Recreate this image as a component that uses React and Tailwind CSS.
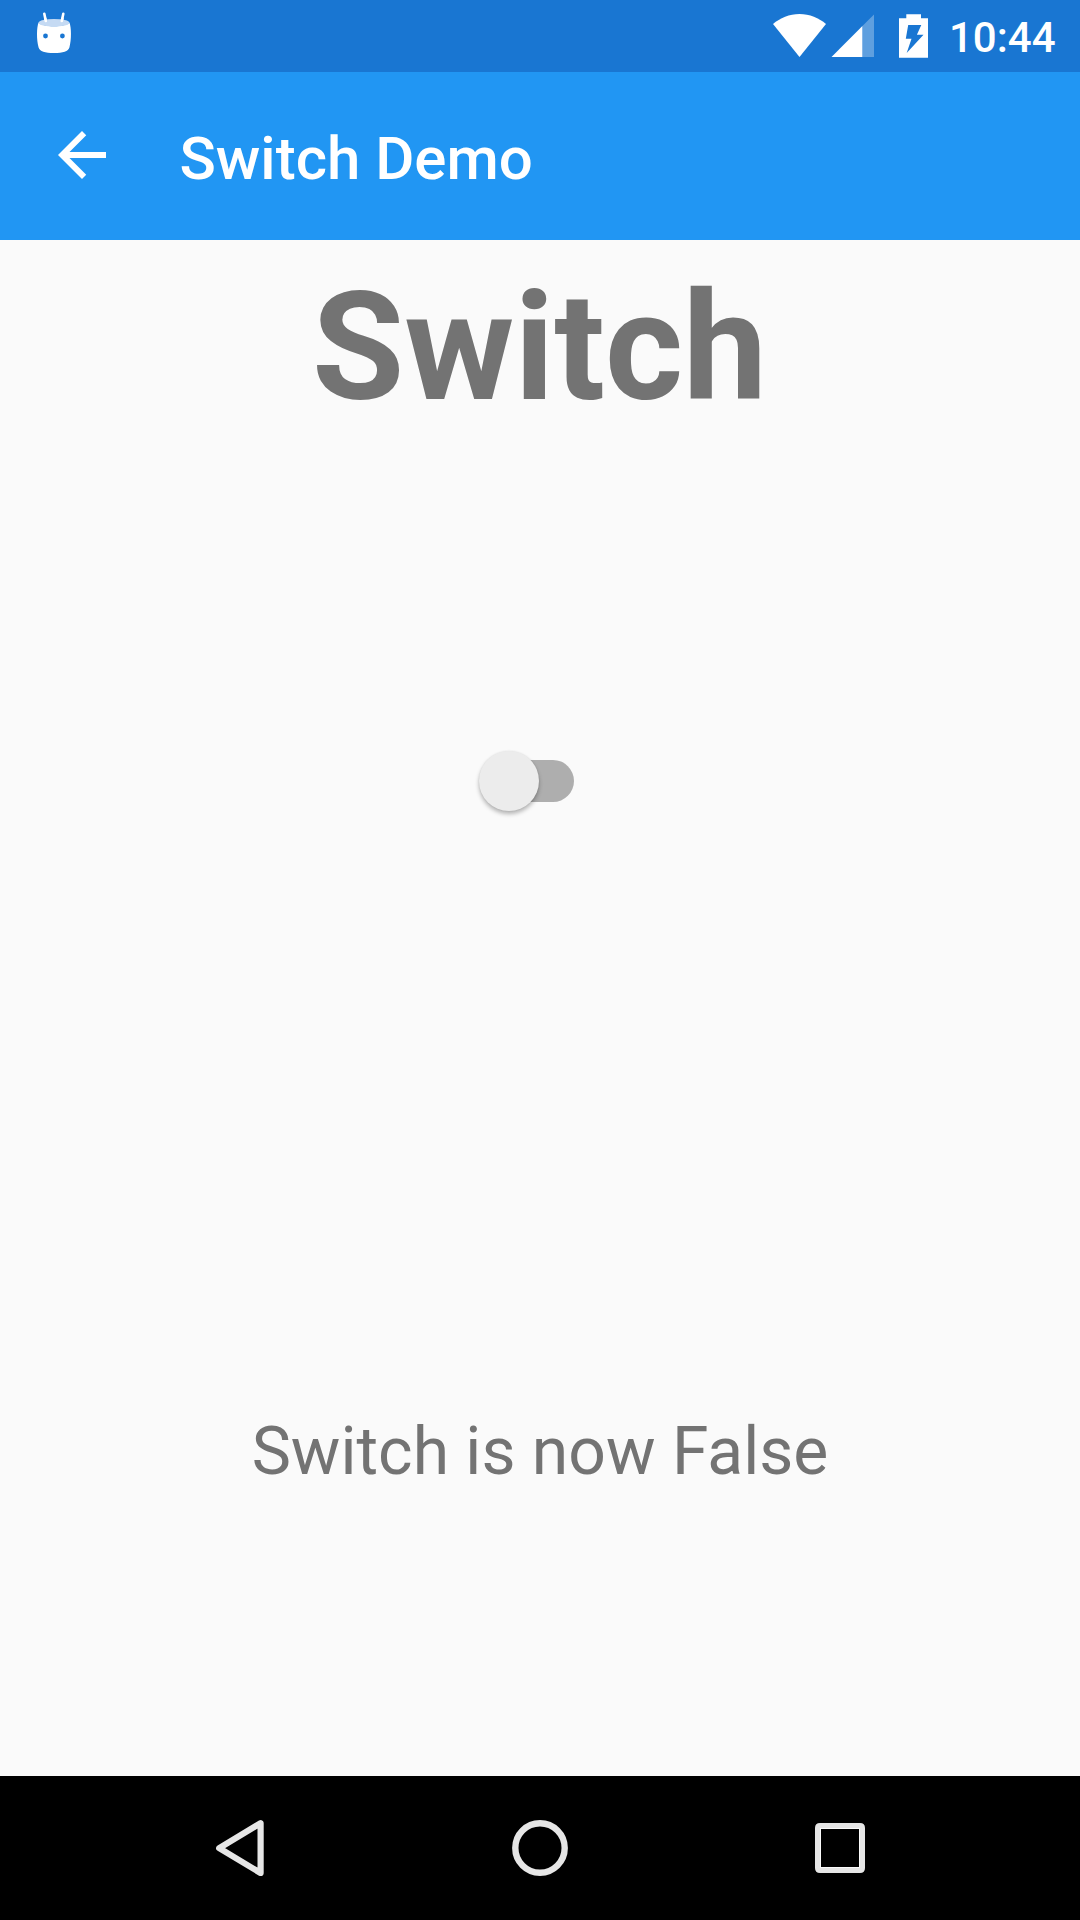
import React, { useState } from "react";

function DebugIcon() {
  return (
    <svg className="h-[44px] w-[36px]" viewBox="36 11 36 44" fill="none">
      <path d="M44.3 13.8L45.7 20.5M63.3 13.8L61.9 20.5" stroke="#fff" strokeWidth="2.6" strokeLinecap="round" />
      <path d="M38.6 22.6C36.6 27 36.4 40 38.6 47.5C39.6 51.3 45 53 54 53C63 53 68.4 51.3 69.4 47.5C71.6 40 71.4 27 69.4 22.6C66 27.6 42 27.6 38.6 22.6Z" fill="#fff" />
      <ellipse cx="54" cy="22.8" rx="15.4" ry="3.9" fill="#c5daf3" />
      <path d="M45.2 18.5L45.8 21M62.4 18.5L61.8 21" stroke="#fff" strokeWidth="2.6" strokeLinecap="round" />
      <circle cx="45.5" cy="36" r="2.4" fill="#1976d2" />
      <circle cx="62.4" cy="36" r="2.4" fill="#1976d2" />
    </svg>
  );
}

function StatusBar() {
  return (
    <div className="flex h-[72px] items-start bg-[#1976d2] pt-[11px] pl-[36px] pr-[24.5px] text-white">
      <DebugIcon />
      <div className="ml-auto flex items-start">
        <svg className="h-[48px] w-[54px]" viewBox="773 11 54 48">
          <path d="M799.5 57L773 24C780 18 789.5 14 799.5 14C809.5 14 819 18 826 24Z" fill="#fff" />
        </svg>
        <svg className="ml-[4px] h-[48px] w-[44px]" viewBox="831 11 44 48">
          <path d="M862.4 57H874V14.5L862.4 26Z" fill="#fff" fillOpacity="0.3" />
          <path d="M831.5 57H862.4V26Z" fill="#fff" />
        </svg>
        <svg className="ml-[23px] h-[48px] w-[32px]" viewBox="898 11 32 48">
          <path
            fillRule="evenodd"
            fill="#fff"
            d="M906.3 14.2H921V18.3H928V57.8H899V18.3H906.3ZM908.2 25L905.8 38.8H911.5L906.7 53L923.5 34.7H916.9L921.3 25Z"
          />
        </svg>
        <span className="mt-[2px] ml-[19px] text-[42px] leading-[50px] font-medium">10:44</span>
      </div>
    </div>
  );
}

function AppBar() {
  return (
    <header className="flex h-[168px] items-start bg-[#2196f3] pl-[46px] text-white">
      <button aria-label="Back" className="mt-[47px]">
        <svg className="size-[72px]" viewBox="0 0 24 24" fill="currentColor">
          <path d="M20 11H7.83l5.59-5.59L12 4l-8 8 8 8 1.41-1.41L7.83 13H20v-2z" />
        </svg>
      </button>
      <h1 className="mt-[52px] ml-[61.5px] text-[60px] leading-[70px] font-medium">Switch Demo</h1>
    </header>
  );
}

function Toggle({ on, onChange }) {
  return (
    <button role="switch" aria-checked={on} onClick={() => onChange(!on)} className="flex h-[62px] w-[95px] items-center">
      <span className={`flex h-[42px] w-[95px] items-center rounded-full ${on ? "justify-end bg-[#90caf9]" : "bg-[linear-gradient(90deg,transparent_30px,#aeaeae_30px)]"}`}>
        <span className="size-[60px] shrink-0 rounded-full bg-[#ececec] shadow-[0_3px_4px_rgba(0,0,0,0.28),0_0_2px_rgba(0,0,0,0.08)]" />
      </span>
    </button>
  );
}

function NavBar() {
  return (
    <nav className="flex h-[144px] items-center justify-between bg-black px-[204px]">
      <svg className="size-[72px]" viewBox="204 1812 72 72" fill="none" stroke="#e6e6e6" strokeWidth="6.2" strokeLinejoin="round">
        <path d="M219.2 1848.2L260.6 1823.2V1873Z" />
      </svg>
      <svg className="size-[72px]" viewBox="0 0 72 72" fill="none" stroke="#e6e6e6" strokeWidth="6.4">
        <circle cx="36" cy="36" r="24.7" />
      </svg>
      <svg className="size-[72px]" viewBox="804 1812 72 72" fill="none">
        <path fill="#e6e6e6" fillRule="evenodd" d="M820 1823H860Q865 1823 865 1828V1868Q865 1873 860 1873H820Q815 1873 815 1868V1828Q815 1823 820 1823ZM821 1829V1867H859V1829Z" />
        <rect x="820.6" y="1828.6" width="38.8" height="38.8" stroke="#fff" strokeWidth="0.8" />
      </svg>
    </nav>
  );
}

export default function App() {
  const [on, setOn] = useState(false);
  return (
    <div className="flex h-[1920px] w-[1080px] flex-col overflow-hidden bg-[#fafafa] font-['Roboto',sans-serif]">
      <StatusBar />
      <AppBar />
      <main className="flex flex-1 flex-col items-center text-[#737373]">
        <h2 className="mt-[20px] mr-[1px] text-[150px] leading-[176px] font-bold">Switch</h2>
        <div className="mt-[314px] mr-[27px]">
          <Toggle on={on} onChange={setOn} />
        </div>
        <p className="mt-[601px] text-[66px] leading-[78px]">Switch is now {on ? "True" : "False"}</p>
      </main>
      <NavBar />
    </div>
  );
}
